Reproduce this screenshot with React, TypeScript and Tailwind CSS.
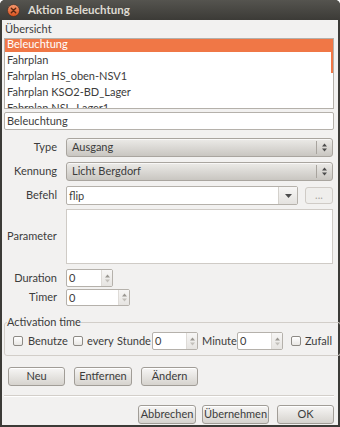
import React from "react";

const UpDown: React.FC<{ dim?: boolean }> = ({ dim }) => (
    <svg width="5" height="9" viewBox="0 0 5 9" className="shrink-0">
        <path d="M0 3.5 L2.5 0.5 L5 3.5 Z" fill={dim ? "#9a9791" : "#4c4c4c"} />
        <path d="M0 5.5 L2.5 8.5 L5 5.5 Z" fill={dim ? "#c2bfba" : "#4c4c4c"} />
    </svg>
);

const Combo: React.FC<{ text: string }> = ({ text }) => (
    <div className="flex h-full flex-1 items-center mr-[1px] rounded-[3px] border border-[#a9a59f] bg-linear-to-b from-[#ecebe8] to-[#c9c6c1] shadow-[inset_0_1px_0_#f8f7f6]">
        <span className="flex-1 pl-[5px]">{text}</span>
        <div className="h-[13px] w-px bg-[#a8a49e]" />
        <div className="flex w-[15px] justify-center">
            <UpDown />
        </div>
    </div>
);

const SpinBox: React.FC<{ value: string; width: string }> = ({ value, width }) => (
    <div className={`flex h-full shrink-0 items-stretch rounded-[2px] border border-[#b5b1ab] bg-white ${width}`}>
        <span className="flex-1 pl-[2px] leading-[16px]">{value}</span>
        <div className="flex w-[11px] items-center justify-center border-l border-[#dedbd7] bg-linear-to-b from-[#f7f6f5] to-[#e6e4e1]">
            <UpDown dim />
        </div>
    </div>
);

const CheckBox: React.FC = () => (
    <div className="h-[10px] w-[10px] shrink-0 rounded-[2px] border border-[#8d8a85] bg-linear-to-b from-[#ffffff] to-[#e9e7e4]" />
);

const Button: React.FC<{ label: string; width: string }> = ({ label, width }) => (
    <div
        className={`flex h-[19px] items-center justify-center rounded-[3px] border border-[#a19d97] bg-linear-to-b from-[#f7f6f5] to-[#d6d3ce] shadow-[inset_0_1px_0_#ffffff] ${width}`}
    >
        {label}
    </div>
);

const items = [
    "Beleuchtung",
    "Fahrplan",
    "Fahrplan HS_oben-NSV1",
    "Fahrplan KSO2-BD_Lager",
    "Fahrplan NSL_Lager1",
];

const App: React.FC = () => {
    return (
        <div className="flex h-[427px] w-[340px] flex-col rounded-t-[5px] bg-[#3c3b37] font-['Lato',sans-serif] text-[11px] text-[#3c3c3c]">
            {/* title bar */}
            <div className="flex h-[20px] items-center rounded-t-[5px] bg-linear-to-b from-[#55544f] to-[#3c3b37]">
                <svg width="13" height="13" viewBox="0 0 13 13" className="ml-[7px]">
                    <defs>
                        <linearGradient id="cb" x1="0" y1="0" x2="0" y2="1">
                            <stop offset="0" stopColor="#f79a70" />
                            <stop offset="1" stopColor="#d9501d" />
                        </linearGradient>
                    </defs>
                    <circle cx="6.5" cy="6.5" r="6" fill="url(#cb)" stroke="#3a2a22" strokeWidth="0.6" />
                    <path d="M4.3 4.3 L8.7 8.7 M8.7 4.3 L4.3 8.7" stroke="#5a2812" strokeWidth="1.4" strokeLinecap="round" />
                </svg>
                <span className="ml-[8px] text-[11.5px] font-bold text-[#dfdbd2]">Aktion Beleuchtung</span>
            </div>

            {/* body */}
            <div className="mx-[2px] mb-[2px] flex flex-1 flex-col bg-[#f2f1f0] pl-[2px] pr-[4px]">
                <div className="h-[18px] pl-[1px] leading-[18px]">Übersicht</div>

                <div className="relative h-[71px] overflow-hidden border border-[#b4b0aa] bg-white">
                    <div className="-mt-[3px]">
                        {items.map((it, i) => (
                            <div
                                key={it}
                                className={`h-[16px] pl-[2px] leading-[16px] ${
                                    i === 0 ? "bg-[#f07746] text-white" : ""
                                }`}
                            >
                                {it}
                            </div>
                        ))}
                    </div>
                    <div className="absolute right-0 top-[13px] h-[21px] w-[2px] bg-[#f07746]" />
                </div>

                <div className="mt-[3px] h-[18px] rounded-[2px] border border-[#b5b1ab] bg-white pl-[2px] leading-[16px]">
                    Beleuchtung
                </div>

                <div className="mt-[8px] flex h-[19px] items-center gap-[9px]">
                    <span className="w-[53px] text-right">Type</span>
                    <Combo text="Ausgang" />
                </div>
                <div className="mt-[5px] flex h-[19px] items-center gap-[9px]">
                    <span className="w-[53px] text-right">Kennung</span>
                    <Combo text="Licht Bergdorf" />
                </div>
                <div className="mt-[5px] flex h-[19px] items-center gap-[9px]">
                    <span className="w-[53px] text-right">Befehl</span>
                    <div className="flex h-full flex-1 items-stretch rounded-[2px] border border-[#b5b1ab] bg-white">
                        <span className="flex-1 pl-[2px] leading-[17px]">flip</span>
                        <div className="flex w-[19px] items-center justify-center border-l border-[#d4d1cc] bg-linear-to-b from-[#f7f6f5] to-[#e4e2df]">
                            <svg width="7" height="4" viewBox="0 0 7 4">
                                <path d="M0 0 L7 0 L3.5 4 Z" fill="#4c4c4c" />
                            </svg>
                        </div>
                    </div>
                    <div className="ml-[-2px] mr-[1px] flex h-[17px] w-[28px] items-center justify-center rounded-[3px] border border-[#cfcbc6] bg-[#efeeec] text-[#aaa7a2]">
                        ...
                    </div>
                </div>
                <div className="mt-[4px] flex h-[55px] items-center gap-[9px]">
                    <span className="w-[53px] pl-[3px] text-left">Parameter</span>
                    <div className="mr-[1px] h-full flex-1 border border-[#cfcbc6] bg-white" />
                </div>
                <div className="mt-[5px] flex h-[18px] items-center gap-[9px]">
                    <span className="w-[53px] text-right">Duration</span>
                    <SpinBox value="0" width="w-[47px]" />
                </div>
                <div className="mt-[2px] flex h-[17px] items-center gap-[9px]">
                    <span className="w-[53px] text-right">Timer</span>
                    <SpinBox value="0" width="w-[64px]" />
                </div>

                <fieldset className="mt-[8px] rounded-[3px] border border-[#d2cec9] px-[8px] pb-[5px]">
                    <legend className="ml-[-6px] leading-[16px]">Activation time</legend>
                    <div className="mt-[2px] flex h-[18px] items-center whitespace-nowrap">
                        <CheckBox />
                        <span className="ml-[5px] w-[37px]">Benutze</span>
                        <div className="ml-[8px]">
                            <CheckBox />
                        </div>
                        <span className="ml-[4px] w-[25px]">every</span>
                        <span className="ml-[5px] w-[33px]">Stunde</span>
                        <div className="ml-[2px] h-full">
                            <SpinBox value="0" width="w-[46px]" />
                        </div>
                        <span className="ml-[4px] w-[33px]">Minute</span>
                        <div className="ml-[2px] h-full">
                            <SpinBox value="0" width="w-[46px]" />
                        </div>
                        <div className="ml-[8px]">
                            <CheckBox />
                        </div>
                        <span className="ml-[4px] w-[27px]">Zufall</span>
                    </div>
                </fieldset>

                <div className="mt-[11px] flex gap-[9px] pl-[4px]">
                    <Button label="Neu" width="w-[57px]" />
                    <Button label="Entfernen" width="w-[58px]" />
                    <Button label="Ändern" width="w-[57px]" />
                </div>

                <div className="mt-[9px] h-px bg-[#d3cfca] shadow-[0_1px_0_#ffffff]" />

                <div className="mt-[9px] flex justify-end gap-[6px]">
                    <Button label="Abbrechen" width="w-[58px]" />
                    <Button label="Übernehmen" width="w-[67px]" />
                    <div className="ml-[2px]">
                        <Button label="OK" width="w-[57px]" />
                    </div>
                </div>
            </div>
        </div>
    );
};

export default App;
